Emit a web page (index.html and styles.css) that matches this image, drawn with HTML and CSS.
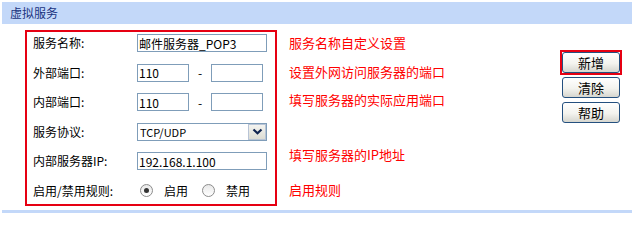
FILE: index.html
```html
<!DOCTYPE html>
<html lang="zh-CN">
<head>
<meta charset="utf-8">
<title>虚拟服务</title>
<link rel="stylesheet" href="styles.css">
</head>
<body>
<div class="header">虚拟服务</div>
<div class="main">
  <div class="formbox">
    <div class="row">
      <span class="label">服务名称:</span>
      <input class="field wide" type="text" value="邮件服务器_POP3">
    </div>
    <div class="row">
      <span class="label">外部端口:</span>
      <input class="field port" type="text" value="110">
      <span class="dash">-</span>
      <input class="field port" type="text" value="">
    </div>
    <div class="row">
      <span class="label">内部端口:</span>
      <input class="field port" type="text" value="110">
      <span class="dash">-</span>
      <input class="field port" type="text" value="">
    </div>
    <div class="row">
      <span class="label">服务协议:</span>
      <div class="selectwrap">
        <select class="field wide sel">
          <option>TCP/UDP</option>
          <option>TCP</option>
          <option>UDP</option>
        </select>
        <span class="arrow"><svg width="11" height="7" viewBox="0 0 11 7"><path d="M1.5 1.5 L5.5 5.2 L9.5 1.5" fill="none" stroke="#0f2350" stroke-width="2.2"/></svg></span>
      </div>
    </div>
    <div class="row">
      <span class="label">内部服务器IP:</span>
      <input class="field wide" type="text" value="192.168.1.100">
    </div>
    <div class="row">
      <span class="label">启用/禁用规则:</span>
      <span class="radio checked"></span><span class="rtext">启用</span>
      <span class="radio"></span><span class="rtext">禁用</span>
    </div>
  </div>
  <div class="notes">
    <div class="note n1">服务名称自定义设置</div>
    <div class="note n2">设置外网访问服务器的端口</div>
    <div class="note n3">填写服务器的实际应用端口</div>
    <div class="note n4">填写服务器的IP地址</div>
    <div class="note n5">启用规则</div>
  </div>
  <div class="buttons">
    <div class="hl"><button class="btn">新增</button></div>
    <button class="btn">清除</button>
    <button class="btn b3">帮助</button>
  </div>
</div>
<div class="footer"></div>
</body>
</html>
```
FILE: styles.css
```css
html, body {
  margin: 0;
  padding: 0;
  background: #ffffff;
  font-family: "Noto Sans CJK SC", "Noto Sans", sans-serif;
  font-size: 12px;
  color: #000;
}
.header {
  margin: 2px 3px 0 2px;
  height: 22px;
  line-height: 22px;
  padding-left: 8px;
  background: #c3d8f9;
  color: #1a3380;
  font-size: 12px;
}
.main {
  display: flex;
  padding-top: 6px;
}
.formbox {
  margin-left: 25px;
  width: 242px;
  border: 2px solid #e60012;
  padding: 0 0 2px 6px;
  display: flex;
  flex-direction: column;
  gap: 7.6px;
}
.row {
  height: 22px;
  display: flex;
  align-items: center;
}
.label {
  width: 104px;
  flex: none;
  font-size: 12px;
  line-height: 22px;
}
.field {
  box-sizing: border-box;
  height: 18px;
  border: 1px solid #7f9db9;
  background: #fff;
  font-family: "Noto Sans CJK SC", "Noto Sans", sans-serif;
  font-size: 12px;
  color: #000;
  padding: 0 0 0 1px;
  margin: 0;
  outline: none;
}
.wide { width: 130px; }
.port { width: 52px; }
.dash {
  width: 22px;
  text-align: center;
  font-size: 12px;
}
.selectwrap {
  position: relative;
  width: 130px;
  height: 18px;
}
.sel {
  -webkit-appearance: none;
  appearance: none;
  display: block;
  border-radius: 0;
  padding-left: 2px;
  font-size: 11px;
}
.arrow {
  position: absolute;
  right: 1px;
  top: 1px;
  width: 18px;
  height: 16px;
  box-sizing: border-box;
  border: 1px solid #b8c4d6;
  background: linear-gradient(#f4f4f0, #dcdcd4);
  display: flex;
  align-items: center;
  justify-content: center;
  pointer-events: none;
}
.radio {
  box-sizing: border-box;
  width: 13px;
  height: 13px;
  border-radius: 50%;
  border: 1px solid #8c8c8c;
  background: linear-gradient(#e8e8e8, #ffffff);
  margin-left: 3px;
  display: inline-flex;
  align-items: center;
  justify-content: center;
  flex: none;
}
.radio.checked::after {
  content: "";
  width: 5px;
  height: 5px;
  border-radius: 50%;
  background: #333;
}
.rtext {
  margin-left: 11px;
  width: 35px;
  font-size: 12px;
}
.notes {
  margin-left: 12px;
  display: flex;
  flex-direction: column;
  color: #ff0000;
  font-size: 13px;
}
.note {
  line-height: 20px;
  height: 20px;
  white-space: nowrap;
}
.n1 { margin-top: 3px; }
.n2 { margin-top: 9px; }
.n3 { margin-top: 8px; }
.n4 { margin-top: 35px; }
.n5 { margin-top: 15px; }
.buttons {
  margin-left: auto;
  margin-right: 13px;
  padding-top: 20px;
  display: flex;
  flex-direction: column;
  align-items: center;
}
.hl {
  border: 2px solid #e60012;
  width: 58px;
  height: 21px;
  margin-bottom: 2px;
}
.btn {
  display: block;
  box-sizing: border-box;
  width: 58px;
  height: 21px;
  margin: 0;
  padding: 0;
  border: 1px solid #24507f;
  border-radius: 3px;
  background: linear-gradient(#ffffff, #f3f3ee 55%, #d6d6cf);
  font-family: "Noto Sans CJK SC", "Noto Sans", sans-serif;
  font-size: 13px;
  line-height: 19px;
  color: #000;
}
.b3 { margin-top: 4px; }
.footer {
  margin: 4px 3px 0 2px;
  height: 3px;
  background: #c3d8f9;
}
```
